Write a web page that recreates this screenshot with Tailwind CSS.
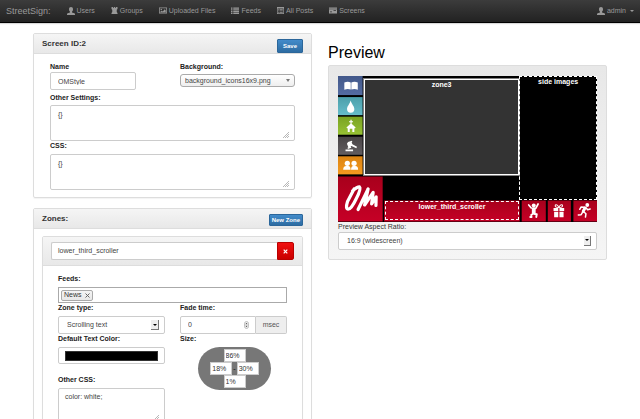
<!DOCTYPE html>
<html lang="en">
<head>
<meta charset="utf-8">
<title>StreetSign</title>
<script src="https://cdn.jsdelivr.net/npm/@tailwindcss/browser@4"></script>
</head>
<body class="bg-white font-['Liberation_Sans',Arial,sans-serif] text-[7px] leading-[10px] text-[#222]">

<nav class="flex h-[23px] items-center border-b border-black bg-linear-to-b from-[#3c3c3c] to-[#222] px-[6px] pb-[1px] text-[#999] shadow-[0_1px_1px_rgba(0,0,0,0.15)]">
  <a href="#" class="mr-[16px] text-[9px]">StreetSign:</a>
  <div class="flex flex-1 items-center gap-[16px]">
    <a href="#" class="flex items-center gap-[2px]">
      <svg class="size-[8px]" viewBox="0 0 14 14" fill="currentColor"><path d="M7 0C4.800 0 3.500 1.600 3.500 3.800c0 1.800.7 3.400 1.700 4.200v1.500L1 11c-.7.400-1 1-1 1.800V14h14v-1.200c0-.8-.3-1.400-1-1.800L8.800 9.500V8c1-.8 1.700-2.400 1.700-4.200C10.500 1.600 9.200 0 7 0z"/></svg>Users</a>
    <a href="#" class="flex items-center gap-[2px]">
      <svg class="size-[7px]" viewBox="0 0 14 14" fill="currentColor"><path d="M1 0h3v2h1.500V0h3v2H10V0h3v4l-1.500 1.500V10l1.500 2v2H1v-2l1.500-2V5.500L1 4z"/></svg>Groups</a>
    <a href="#" class="flex items-center gap-[2px]">
      <svg class="h-[7px] w-[8px]" viewBox="0 0 16 14" fill="currentColor"><path fill-rule="evenodd" d="M0 1h16v12H0zM1.500 2.500v9h13v-9z"/><circle cx="4.500" cy="5" r="1.500"/><path d="M2.500 11V9.500l3-2 2 1.500 4-4.500 2 2.500v4z"/></svg>Uploaded Files</a>
    <a href="#" class="flex items-center gap-[2px]">
      <svg class="h-[7px] w-[8px]" viewBox="0 0 16 14" fill="currentColor"><path d="M0 1h3v2.500H0zM4.500 1H16v2.500H4.500zM0 4.500h3V7H0zM4.500 4.500H16V7H4.500zM0 8h3v2.500H0zM4.500 8H16v2.500H4.500zM0 11.500h3V14H0zM4.500 11.500H16V14H4.500z"/></svg>Feeds</a>
    <a href="#" class="flex items-center gap-[2px]">
      <svg class="size-[7px]" viewBox="0 0 14 14" fill="currentColor"><path fill-rule="evenodd" d="M0 0h14v14H0zM1.300 3v9.700h11.400V3z"/><path d="M2.500 4.500h2V6h-2zM5.500 4.500h6V6h-6zM2.500 7h2v1.500h-2zM5.500 7h6v1.500h-6zM2.500 9.800h2v1.500h-2zM5.500 9.800h6v1.500h-6z"/></svg>All Posts</a>
    <a href="#" class="flex items-center gap-[2px]">
      <svg class="h-[7px] w-[8px]" viewBox="0 0 16 14" fill="currentColor"><path d="M0 1h16v2.500H0z"/><path fill-rule="evenodd" d="M0 4.500h16V13H0zM2 9v1.500h4V9zM9 6v1.500h5V6z"/></svg>Screens</a>
  </div>
  <a href="#" class="flex items-center gap-[2px]">
    <svg class="size-[8px]" viewBox="0 0 14 14" fill="currentColor"><path d="M7 0C4.800 0 3.500 1.600 3.500 3.800c0 1.800.7 3.400 1.700 4.200v1.500L1 11c-.7.400-1 1-1 1.800V14h14v-1.200c0-.8-.3-1.400-1-1.800L8.800 9.500V8c1-.8 1.700-2.400 1.700-4.200C10.500 1.600 9.200 0 7 0z"/></svg>admin
    <svg class="ml-[2px] h-[2px] w-[4px]" viewBox="0 0 4 2" fill="currentColor"><path d="M0 0h4L2 2z"/></svg></a>
</nav>

<main class="grid grid-cols-2 items-start gap-[16px] px-[33px] pt-[10px]">
  <div class="flex flex-col gap-[10px]">

    <section class="rounded-[2px] border border-[#ddd] pb-[7px] shadow-[0_1px_1px_rgba(0,0,0,0.05)]">
      <header class="flex h-[20px] items-center justify-between border-b border-[#ddd] bg-linear-to-b from-[#f5f5f5] to-[#e8e8e8] px-[8px]">
        <h2 class="text-[8px] font-bold text-[#333]">Screen ID:2</h2>
        <button class="mt-[4px] h-[14px] rounded-[1px] border border-[#2b669a] bg-linear-to-b from-[#428bca] to-[#2d6ca2] px-[5px] text-[6px] font-bold leading-[10px] text-white">Save</button>
      </header>
      <div class="px-[16px] pt-[8px]">
        <div class="grid grid-cols-2 gap-[15px]">
          <div>
            <label for="name" class="block font-bold">Name</label>
            <input id="name" value="OMStyle" class="block h-[18px] w-3/4 rounded-[2px] border border-[#ccc] px-[7px] leading-[16px] text-[#444]">
          </div>
          <div>
            <label for="bg" class="block font-bold">Background:</label>
            <div class="relative mt-[2px]">
              <select id="bg" class="block h-[13px] w-full appearance-none rounded-[3px] border border-[#aaa] bg-linear-to-b from-white to-[#eee] px-[4px] leading-[11px] text-[#444]"><option>background_icons16x9.png</option></select>
              <svg class="pointer-events-none absolute top-[5px] right-[5px] h-[3px] w-[4px]" viewBox="0 0 4 3" fill="#777"><path d="M0 0h4L2 3z"/></svg>
            </div>
          </div>
        </div>
        <label for="other" class="mt-[3px] block font-bold">Other Settings:</label>
        <div class="relative mt-[2px]">
          <textarea id="other" class="block h-[36px] w-full resize-none rounded-[2px] border border-[#ccc] px-[7px] py-[4px] text-[#444]">{}</textarea>
          <svg class="pointer-events-none absolute right-[6px] bottom-[3px] size-[6px]" viewBox="0 0 6 6" stroke="#999" stroke-width="0.700"><path d="M0 6 6 0M2 6 6 2M4 6 6 4"/></svg>
        </div>
        <label for="css" class="block font-bold">CSS:</label>
        <div class="relative mt-[3px]">
          <textarea id="css" class="block h-[36px] w-full resize-none rounded-[2px] border border-[#ccc] px-[7px] py-[4px] text-[#444]">{}</textarea>
          <svg class="pointer-events-none absolute right-[6px] bottom-[3px] size-[6px]" viewBox="0 0 6 6" stroke="#999" stroke-width="0.700"><path d="M0 6 6 0M2 6 6 2M4 6 6 4"/></svg>
        </div>
      </div>
    </section>

    <section class="rounded-[2px] border border-[#ddd] pb-[8px] shadow-[0_1px_1px_rgba(0,0,0,0.05)]">
      <header class="flex h-[20px] items-center justify-between border-b border-[#ddd] bg-linear-to-b from-[#f5f5f5] to-[#e8e8e8] px-[8px]">
        <h2 class="text-[8px] font-bold text-[#333]">Zones:</h2>
        <button class="mt-[2px] h-[12px] rounded-[1px] border border-[#2b669a] bg-linear-to-b from-[#428bca] to-[#2d6ca2] px-[2px] text-[6px] font-bold leading-[10px] text-white">New Zone</button>
      </header>
      <div class="mx-[8px] mt-[7px] rounded-[2px] border border-[#ddd] pb-[8px] shadow-[0_1px_1px_rgba(0,0,0,0.05)]">
        <div class="flex border-b border-[#ddd] bg-linear-to-b from-[#f5f5f5] to-[#e8e8e8] px-[8px] py-[5px]">
          <textarea aria-label="Zone name" rows="1" class="block h-[18px] min-w-0 flex-1 resize-none overflow-hidden rounded-l-[2px] border border-r-0 border-[#ccc] bg-white px-[6px] leading-[16px] whitespace-nowrap text-[#444]">lower_third_scroller</textarea>
          <button aria-label="Delete zone" class="flex h-[18px] w-[17px] items-center justify-center rounded-r-[2px] border border-[#b90000] bg-linear-to-b from-[#f01010] to-[#c90000]">
            <svg class="size-[5px]" viewBox="0 0 5 5" stroke="#fff" stroke-width="1.200"><path d="M.7.7l3.600 3.600M4.300.7.7 4.300"/></svg>
          </button>
        </div>
        <div class="px-[15px] pt-[8px]">
          <label for="feeds" class="block font-bold">Feeds:</label>
          <div class="mt-[3px] flex h-[16px] items-center border border-[#aaa] px-[2px]">
            <span class="flex h-[11px] items-center gap-[3px] rounded-[2px] border border-[#aaa] bg-linear-to-b from-[#f4f4f4] to-[#e8e8e8] px-[2px] text-[#333]">News
              <button aria-label="Remove News"><svg class="block size-[5px]" viewBox="0 0 5 5" stroke="#666" stroke-width="1"><path d="M.5.5l4 4M4.500.5l-4 4"/></svg></button></span>
            <input id="feeds" class="min-w-0 flex-1 outline-none">
          </div>
          <div class="grid grid-cols-2 gap-[15px]">
            <div>
              <label for="ztype" class="block font-bold">Zone type:</label>
              <div class="relative mt-[3px]">
                <select id="ztype" class="block h-[18px] w-full appearance-none rounded-[2px] border border-[#ccc] bg-white px-[8px] leading-[16px] text-[#444]"><option>Scrolling text</option></select>
                <span class="pointer-events-none absolute top-[4px] right-[6px] flex h-[10px] w-[8px] items-center justify-center border-r border-b border-[#777] bg-[#eee]"><svg class="h-[2px] w-[4px]" viewBox="0 0 4 2"><path d="M0 0h4L2 2z"/></svg></span>
              </div>
              <label for="color" class="block font-bold">Default Text Color:</label>
              <div class="mt-[3px] flex h-[17px] items-center rounded-[2px] border border-[#ccc] px-[6px]">
                <input id="color" type="color" value="#000000" class="block h-[10px] w-full appearance-none border border-[#333] bg-black p-0 [&::-webkit-color-swatch-wrapper]:p-0 [&::-webkit-color-swatch]:border-none">
              </div>
              <label for="ocss" class="mt-[11px] block font-bold">Other CSS:</label>
              <div class="relative mt-[3px]">
                <textarea id="ocss" class="block h-[36px] w-full resize-none rounded-[2px] border border-[#ccc] px-[6px] py-[3px] text-[#444]">color: white;</textarea>
                <svg class="pointer-events-none absolute right-[6px] bottom-[3px] size-[6px]" viewBox="0 0 6 6" stroke="#999" stroke-width="0.700"><path d="M0 6 6 0M2 6 6 2M4 6 6 4"/></svg>
              </div>
            </div>
            <div>
              <label for="fade" class="block font-bold">Fade time:</label>
              <div class="relative mt-[3px] flex h-[18px]">
                <input id="fade" inputmode="numeric" value="0" class="min-w-0 flex-1 rounded-l-[2px] border border-[#ccc] px-[7px] leading-[16px] text-[#444]">
                <span class="flex w-[31px] items-center justify-center rounded-r-[2px] border border-l-0 border-[#ccc] bg-[#eee] text-[#555]">msec</span>
                <svg class="pointer-events-none absolute top-[5px] right-[38px] h-[8px] w-[5px]" viewBox="0 0 5 8" fill="none"><rect x=".5" y=".5" width="4" height="7" rx="2" fill="#f4f4f4" stroke="#aaa" stroke-width=".7"/><path d="M1.300 3.300 2.500 1.800l1.200 1.500zM1.300 4.700l1.200 1.500 1.200-1.500z" fill="#555"/></svg>
              </div>
              <p class="font-bold">Size:</p>
              <div class="mt-[3px] ml-[18px] flex h-[43px] w-[73px] flex-col items-center justify-center rounded-full bg-[#777] text-[#333]">
                <input aria-label="Top" value="86%" class="block h-[13px] w-[22px] border border-[#ccc] bg-white px-[1px]">
                <div class="flex items-center">
                  <input aria-label="Left" value="18%" class="block h-[13px] w-[22px] border border-[#ccc] bg-white px-[1px]"><span class="px-[1px] font-bold">-</span><input aria-label="Right" value="30%" class="block h-[13px] w-[22px] border border-[#ccc] bg-white px-[1px]">
                </div>
                <input aria-label="Bottom" value="1%" class="block h-[13px] w-[22px] border border-[#ccc] bg-white px-[1px]">
              </div>
            </div>
          </div>
        </div>
      </div>
    </section>
  </div>

  <div class="pt-[10px]">
    <h1 class="text-[16px] leading-[20px] text-black">Preview</h1>
    <section class="mt-[2px] rounded-[2px] border border-[#ddd] bg-linear-to-b from-[#e8e8e8] to-[#f5f5f5] px-[9px] pt-[10px] pb-[9px]">
      <div class="relative aspect-[258/145] w-full overflow-hidden bg-black text-center font-bold leading-[10px] text-white">
        <svg class="absolute inset-0 size-full" viewBox="0 0 258 145" preserveAspectRatio="none">
          <defs>
            <linearGradient id="red" x1="0" y1="0" x2="0" y2="1"><stop offset="0" stop-color="#a8001c"/><stop offset="1" stop-color="#c60026"/></linearGradient>
            <linearGradient id="blue" x1="0" y1="0" x2="0" y2="1"><stop offset="0" stop-color="#42588a"/><stop offset="1" stop-color="#546ca2"/></linearGradient>
            <linearGradient id="teal" x1="0" y1="0" x2="0" y2="1"><stop offset="0" stop-color="#4b9faa"/><stop offset="1" stop-color="#66bdcb"/></linearGradient>
            <linearGradient id="green" x1="0" y1="0" x2="0" y2="1"><stop offset="0" stop-color="#7aa322"/><stop offset="1" stop-color="#97c234"/></linearGradient>
            <linearGradient id="gray" x1="0" y1="0" x2="0" y2="1"><stop offset="0" stop-color="#484446"/><stop offset="1" stop-color="#625d60"/></linearGradient>
            <linearGradient id="orange" x1="0" y1="0" x2="0" y2="1"><stop offset="0" stop-color="#dc8412"/><stop offset="1" stop-color="#f49a20"/></linearGradient>
          </defs>
          <path fill="url(#blue)" d="M0 0h24.500v19H0z"/>
          <path fill="url(#teal)" d="M0 21h24.500v18H0z"/>
          <path fill="url(#green)" d="M0 40.500h24.500v18H0z"/>
          <path fill="url(#gray)" d="M0 60.500h24.500v18H0z"/>
          <path fill="url(#orange)" d="M0 80h24.500v18H0z"/>
          <path fill="url(#red)" d="M0 100h44.500v45H0z"/>
          <path fill="url(#red)" d="M46 124h135v21H46zM183 124h24v21h-24zM209 124h23v21h-23zM234.500 124H258v21h-23.500z"/>
          <g fill="#fff">
            <path d="M6.300 6.500Q9.800 5 12.700 6.500V13.500Q9.500 12.500 6.300 13.700zM13.300 6.500Q16.300 5 19.700 6.500V13.700Q16.500 12.500 13.300 13.500z"/>
            <path d="M12.600 24.300C13.500 28 16.300 30 16.300 33A3.600 3.600 0 0 1 9 33C9 30 11.700 28 12.600 24.300z"/>
            <path d="M12.400 43.500h1.200v1.500h1.400v1.200h-1.400v1.300L17.600 51.300l-.8 1-.5-.4V55.900h-2V52.500h-2.600V55.900h-2V51.900l-.5.400-.8-1L12.400 47.500v-1.300h-1.400v-1.200h1.400z"/>
            <path d="M10 65.700l3.800-1.300.5 1.300-.8.400.9 2 4.500 2.500-.6 1.300-4.900-2.200-.8.400.7 1.400-3.400 1.300-.5-1.300.9-.5-1.400-3.500zM7.500 73.200h7.500v1.800H7.500z"/>
            <circle cx="9.300" cy="87" r="2.600"/><circle cx="16" cy="87" r="2.600"/>
            <path d="M5.200 93.300Q5 90 8.300 89.700h2Q12.600 90 12.500 93.300zM13 93.300Q13 90 15.300 89.700h2Q20.200 90 20 93.300z"/>
            <circle cx="195" cy="129" r="2"/>
            <circle cx="248.300" cy="128.500" r="1.900"/>
            <path d="M214.700 131.500h4.700v3h-4.700zM220.600 131.500h4.700v3h-4.700zM215.300 135.300h4.100v5.400h-4.100zM220.600 135.300h4.100v5.400h-4.100z"/>
          </g>
          <g fill="none" stroke="#fff" stroke-linecap="round" stroke-linejoin="round">
            <path stroke-width="1" d="M220 131Q215.500 131 216.500 128.500Q218.500 127.500 220 131Q224.500 131 223.500 128.500Q221.500 127.500 220 131"/>
            <path stroke-width="1.700" d="M190 128.500l2.500 3 4.500.300 2.300-4.300"/>
            <path stroke-width="3.800" d="M195 133v3"/>
            <path stroke-width="1.900" d="M196 137.500l2 .2-.5 2.800M194 137.500l-1.500.8.300 2.200h-1.300"/>
            <path stroke-width="2.900" d="M246 131.500l-1.700 3.200"/>
            <path stroke-width="1.500" d="M246.700 131l2 2.300 2.500-.8M245.700 130.700l-3.500-.2-1.400 2.300M245 135.500l2 1.700-.5 3.300M243.700 135.500l-1.500 2.700-2.800.2"/>
            <path stroke-width="3.200" d="M16 112.500L9.500 125Q7 133 10.500 132.500Q13.500 132 18 122.500Q23.500 112 21.500 110.500Q19.500 110 14.500 114.500"/>
            <path stroke-width="3.200" d="M20 133L30 112.500L26.500 128.500L35 116L33.500 127.500L38 120.500L37.800 129"/>
          </g>
        </svg>
        <div class="absolute top-[2%] left-[10%] h-[66%] w-[60%] border border-white bg-[#333] outline outline-white/50">zone3</div>
        <div class="absolute top-0 left-[70%] h-[85%] w-[30%] border border-dashed border-white">side images</div>
        <div class="absolute top-[69%] left-[70%] h-[16%] border-l border-dashed border-white/60"></div>
        <div class="absolute top-[86%] left-[18%] h-[13%] w-[52%] border border-dashed border-white">lower_third_scroller</div>
      </div>
      <label for="ratio" class="block text-[#333]">Preview Aspect Ratio:</label>
      <div class="relative">
        <select id="ratio" class="block h-[18px] w-full appearance-none rounded-[2px] border border-[#ccc] bg-white px-[8px] leading-[16px] text-[#444]"><option>16:9 (widescreen)</option></select>
        <span class="pointer-events-none absolute top-[4px] right-[6px] flex h-[10px] w-[7px] items-center justify-center border-r border-b border-[#777] bg-[#eee]"><svg class="h-[2px] w-[4px]" viewBox="0 0 4 2"><path d="M0 0h4L2 2z"/></svg></span>
      </div>
    </section>
  </div>
</main>
</body>
</html>
